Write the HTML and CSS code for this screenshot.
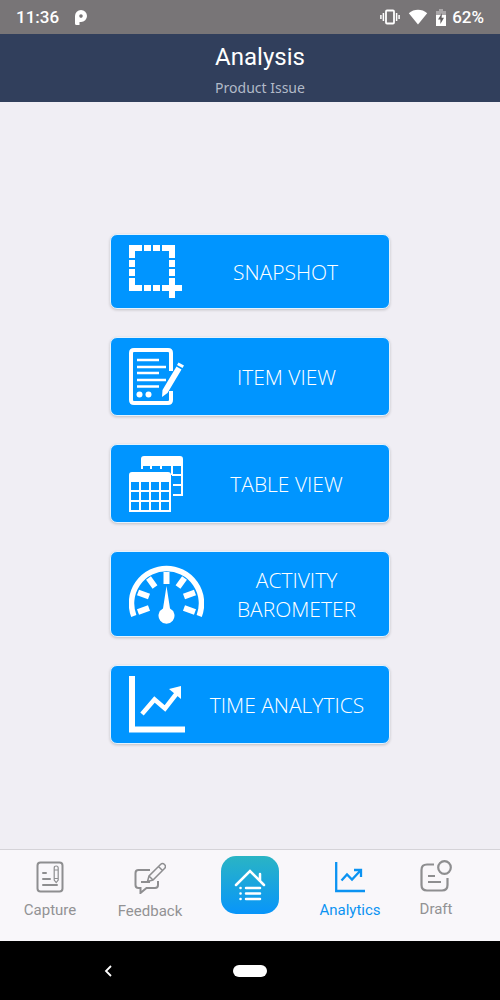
FILE: index.html
```html
<!DOCTYPE html>
<html lang="en">
<head>
<meta charset="utf-8">
<meta name="viewport" content="width=device-width, initial-scale=1">
<title>Analysis</title>
<link rel="stylesheet" href="styles.css">
</head>
<body>
<div class="screen">
  <div class="status">
    <span class="clock">11:36</span>
    <svg class="status-p" width="14" height="17" viewBox="0 0 14 17"><path fill="#fff" fill-rule="evenodd" d="M1 14.500V7a6 6 0 1 1 6 6H5.500V16H2.500Q1 16 1 14.500ZM7 5.300a1.800 1.800 0 1 0 0 3.600a1.800 1.800 0 0 0 0-3.600Z"/></svg>
    <span class="status-icons">
      <svg width="20" height="16" viewBox="0 0 20 16"><rect x="6" y="1.500" width="8" height="13" rx="1" fill="none" stroke="#fff" stroke-width="1.800"/><path d="M3.400 4v8M16.600 4v8M.9 6v4M19.100 6v4" stroke="#fff" stroke-width="1.500"/></svg>
      <svg width="20" height="16" viewBox="0 0 20 16"><path fill="#fff" d="M.8 4.200C6-.4 14-.4 19.200 4.200L10 15.600Z"/></svg>
      <svg width="10" height="17" viewBox="0 0 10 17"><path fill="#aaa7a9" d="M3 0h4v2h3v6H0V2h3Z"/><path fill="#fff" d="M0 6h10v11H0Z"/><path fill="#625f61" d="M6 4 2 10.500h2.400V15L8 8.800H5.600Z"/></svg>
    </span>
    <span class="battery">62%</span>
  </div>
  <header class="header">
    <h1 class="title">Analysis</h1>
    <p class="subtitle">Product Issue</p>
  </header>
  <main class="menu">
    <button class="tile" type="button">
      <svg width="53" height="53" viewBox="0 0 53 53" fill="#fff"><path d="M0 0h13v6H6v7H0ZM15 0h7v6h-7ZM24 0h7v6h-7ZM33 0h13v13h-6V6h-7ZM0 15h6v7H0ZM0 24h6v7H0ZM40 15h6v7h-6ZM40 24h6v7h-6ZM0 33h6v7h7v6H0ZM15 40h7v6h-7ZM24 40h7v6h-7ZM33 40h7v-7h6v7h7v6h-7v7h-6v-7h-7Z"/></svg>
      <span class="tile-label">SNAPSHOT</span>
    </button>
    <button class="tile" type="button">
      <svg width="55" height="57" viewBox="0 0 55 57"><path d="M42 23V5Q42 2 39 2H5Q2 2 2 5V52Q2 55 5 55H39Q42 55 42 52V43" fill="none" stroke="#fff" stroke-width="4"/><path d="M8 12H30M8 19H37M8 25H30M8 32H37M8 38.500H30" stroke="#fff" stroke-width="2.400"/><circle cx="10.500" cy="46.500" r="3" fill="#fff"/><circle cx="19.500" cy="46.500" r="3" fill="#fff"/><path fill="#fff" d="m47.500 18.500 5 3L38.500 45l-5.500 4 .5-7ZM49.500 14.500l5.500 3-1.500 2.500-5.500-3Z"/></svg>
      <span class="tile-label">ITEM VIEW</span>
    </button>
    <button class="tile" type="button">
      <svg width="55" height="57" viewBox="0 0 55 57"><path fill="#fff" d="M12 14V4q0-3 3-3H51q3 0 3 3V11H14V14ZM0 27V20q0-3 3-3H39q3 0 3 3V27Z"/><path fill="none" stroke="#fff" stroke-width="2" d="M22 10v4M32 10v4M43 10v10M53 10v30M43 20H54M44 30H54M44 40H54M1 27V56M11 27V56M21 27V56M31 27V56M41 27V56M0 36H42M0 46H42M0 56H42"/></svg>
      <span class="tile-label">TABLE VIEW</span>
    </button>
    <button class="tile tile-tall" type="button">
      <svg width="75" height="60" viewBox="0 0 75 60"><path fill="none" stroke="#fff" stroke-width="5.500" d="M4.800 52A35 35 0 1 1 70.200 52"/><path stroke="#fff" stroke-width="6" d="M37.500 8V20M19.500 14 26 23M55.500 14 49 23M9 28.500l11 4M66 28.500l-11 4M9 48l11-4M66 48l-11-4"/><path fill="#fff" d="M37.500 22 41 44.500a8 8 0 1 1-7 0Z"/></svg>
      <span class="tile-label">ACTIVITY<br>BAROMETER</span>
    </button>
    <button class="tile" type="button">
      <svg width="56" height="57" viewBox="0 0 56 57"><path fill="none" stroke="#fff" stroke-width="6" d="M3 0V53.500H56"/><path fill="none" stroke="#fff" stroke-width="4.500" d="M13 38 25.500 23.500 36 32.500 48 17"/><path fill="#fff" d="M52 10V23L40 13Z"/></svg>
      <span class="tile-label">TIME ANALYTICS</span>
    </button>
  </main>
  <nav class="tabs">
    <a class="tab" href="#capture">
      <svg width="28" height="32" viewBox="0 0 28 32" fill="none" stroke="#8e8e90" stroke-width="2"><rect x="1.500" y="1.500" width="25" height="29" rx="3"/><path d="M7 12h3M7 18h7M7 24h14" stroke-linecap="round"/><path stroke-width="1.200" d="M18.200 7q0-2 2-2t2 2v12l-2 2.500-2-2.500ZM18.200 9h4M18.200 17.500h4"/></svg>
      <span>Capture</span>
    </a>
    <a class="tab tab-low" href="#feedback">
      <svg width="32" height="32" viewBox="0 0 32 32" fill="none" stroke="#8e8e90" stroke-width="2"><path d="M16 8H4.500Q1.500 8 1.500 11V23Q1.500 26 4.500 26H6.500V31L12.500 26H21Q24 26 24 23V19M7 20H16"/><path stroke-width="1.500" d="M13.500 19.500 15 14 26.500 2.500q2-2 4 0t0 4L19 18ZM15 14l4 4M24.500 4.500l4 4"/></svg>
      <span>Feedback</span>
    </a>
    <a class="home" href="#home" aria-label="Home">
      <svg width="32" height="32" viewBox="0 0 32 32" fill="none" stroke="#fff" stroke-width="2.500" stroke-linecap="round"><path d="M2 16 16 2 30 16M26 12V5"/><path d="M12 19H26M12 24.500H26M12 30H26M6.500 19h.1M6.500 24.500h.1M6.500 30h.1"/></svg>
    </a>
    <a class="tab tab-active" href="#analytics" aria-current="page">
      <svg width="32" height="32" viewBox="0 0 32 32" fill="none" stroke="#0b93f2" stroke-width="2.300"><path d="M2.200 1V30H31"/><path d="M7.500 19.500 13 13.500 18 18.500 26.500 9.500M20 9H27V16"/></svg>
      <span>Analytics</span>
    </a>
    <a class="tab tab-high" href="#draft">
      <svg width="32" height="32" viewBox="0 0 32 32" fill="none" stroke="#8e8e90" stroke-width="2.200"><path d="M14 4.500H7Q1.500 4.500 1.500 10V25Q1.500 30.500 7 30.500H22Q27.500 30.500 27.500 25V18M8 16H15M8 22H21"/><circle cx="24.500" cy="7.500" r="6.300"/></svg>
      <span>Draft</span>
    </a>
  </nav>
  <div class="system">
    <button class="back" type="button" aria-label="Back"><svg width="8" height="12" viewBox="0 0 8 12"><path d="M7 1 2 6l5 5" fill="none" stroke="#fff" stroke-width="1.800"/></svg></button>
    <button class="pill" type="button" aria-label="Home screen"></button>
  </div>
</div>
</body>
</html>
```
FILE: styles.css
```css
* { box-sizing: border-box; }
body { margin: 0; background: #f0eef4; font-family: Roboto, sans-serif; }
svg { display: block; flex: none; }
button { font: inherit; color: inherit; cursor: pointer; }
.screen { display: flex; flex-direction: column; min-height: 100vh; }

.status {
  display: flex;
  align-items: center;
  height: 34px;
  padding: 0 16px;
  background: #787577;
  color: #fff;
  font-size: 17px;
  font-weight: 500;
}
.status-p { margin-left: 15px; }
.status-icons { display: flex; align-items: center; gap: 8px; margin-left: auto; }
.battery { margin-left: 6px; }

.header {
  padding: 8px 0 4px 20px;
  background: #313f5c;
  text-align: center;
}
.title { margin: 0; color: #fff; font-size: 24px; font-weight: 400; line-height: 30px; }
.subtitle {
  margin: 6px 0 0;
  color: #b2bac8;
  font-family: "Noto Sans", sans-serif;
  font-size: 14px;
  line-height: 20px;
}

.menu {
  flex: 1;
  display: flex;
  flex-direction: column;
  align-items: center;
  justify-content: center;
  gap: 28px;
  padding-top: 27px;
}
.tile {
  display: flex;
  align-items: center;
  width: 56%;
  padding: 10px 0 10px 18px;
  border: 1px solid #e4f3fe;
  border-radius: 7px;
  background: #0095ff;
  box-shadow: 0 1px 3px rgba(0, 0, 0, 0.2);
  color: #fff;
}
.tile-tall { padding-top: 12px; padding-bottom: 12px; }
.tile-label {
  flex: 1;
  padding-top: 2px;
  font-family: "Open Sans", sans-serif;
  font-size: 21px;
  font-weight: 300;
  line-height: 29px;
  text-align: center;
}

.tabs {
  display: grid;
  grid-template-columns: repeat(5, 1fr);
  height: 92px;
  padding-top: 6px;
  border-top: 1px solid #d5d3d8;
  background: #f9f7fa;
}
.tab {
  display: flex;
  flex-direction: column;
  align-items: center;
  gap: 8px;
  padding-top: 5px;
  color: #929294;
  font-size: 15px;
  line-height: 18px;
  text-decoration: none;
}
.tab-low { padding-top: 6px; }
.tab-high { padding-top: 4px; padding-right: 28px; }
.tab-active { color: #0b93f2; }
.home {
  display: grid;
  place-items: center;
  justify-self: center;
  width: 58px;
  height: 58px;
  border-radius: 15px;
  background: linear-gradient(#2ab4c4, #0895fa);
}

.system {
  display: grid;
  grid-template-columns: 1fr auto 1fr;
  align-items: center;
  height: 59px;
  padding: 0 104px;
  background: #000;
}
.back { justify-self: start; padding: 0; border: 0; background: none; }
.pill { width: 34px; height: 12px; padding: 0; border: 0; border-radius: 6px; background: #fff; }
```
